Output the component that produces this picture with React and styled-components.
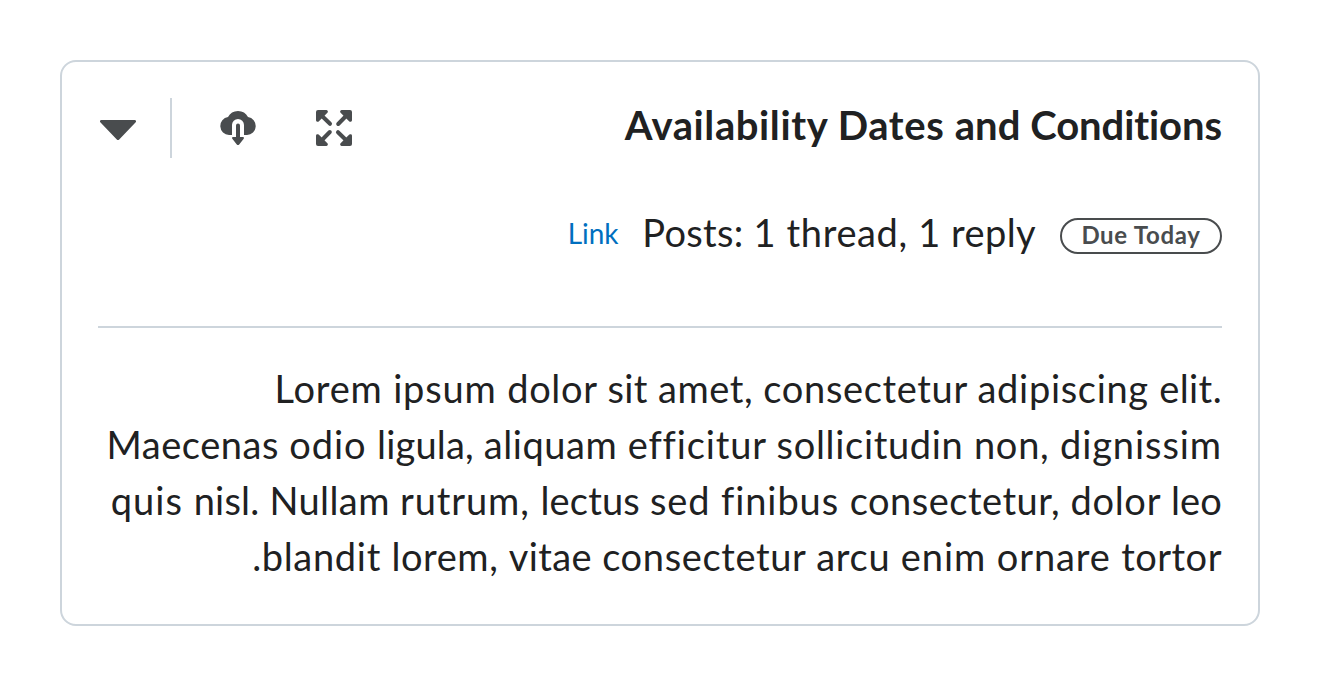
import React from 'react';
import styled, { createGlobalStyle } from 'styled-components';

const Global = createGlobalStyle`
  * { box-sizing: border-box; }
  body {
    margin: 0;
    background: #fff;
    color: #202122;
    font-family: Lato, "Open Sans", sans-serif;
  }
`;
const Page = styled.main`
  height: 686px;
  padding: 60px;
`;
const Panel = styled.section`
  height: 566px;
  padding: 36px;
  border: 2px solid #cdd5dc;
  border-radius: 16px;
`;
const Header = styled.header`
  display: flex;
  align-items: flex-start;
  justify-content: space-between;
  height: 60px;
`;
const Title = styled.h2`
  margin: 0;
  font-size: 40px;
  font-weight: 700;
  line-height: 54px;
  white-space: nowrap;
`;
const Tools = styled.div`
  display: flex;
  direction: ltr;
`;
const IconButton = styled.button`
  display: flex;
  align-items: center;
  justify-content: center;
  width: ${(p) => p.$width || 96}px;
  height: 60px;
  padding: 0;
  border: 0;
  background: none;
  color: #494c4e;
`;
const Divider = styled.div`
  width: 2px;
  height: 60px;
  margin: 0 18px 0 32px;
  background: #cdd5dc;
`;
const Meta = styled.div`
  display: flex;
  align-items: center;
  gap: 24px;
  height: 56px;
  margin-top: 48px;
`;
const Badge = styled.span`
  width: 162px;
  height: 36px;
  margin-top: 4px;
  border: 2px solid #494c4e;
  border-radius: 18px;
  color: #494c4e;
  font-size: 24px;
  font-weight: 700;
  line-height: 29px;
  text-align: center;
  white-space: nowrap;
`;
const Posts = styled.span`
  height: 56px;
  font-size: 38px;
  line-height: 52px;
  white-space: nowrap;
`;
const Link = styled.a`
  height: 40px;
  color: #006fbf;
  font-size: 28px;
  line-height: 38px;
  letter-spacing: -0.1px;
`;
const Content = styled.div`
  margin-top: 64px;
  padding-top: 32px;
  border-top: 2px solid #cdd5dc;
`;
const Paragraph = styled.p`
  margin: 0;
  font-size: 38px;
  line-height: 56px;
`;
const Line = styled.span`
  display: block;
  text-align: right;
  white-space: nowrap;
`;
const Word = styled.span`
  letter-spacing: ${(p) => p.$tracking}px;
`;

const Tracked = ({ words }) =>
  words.map(([word, tracking], index) => {
    const next = words[index + 1];
    return (
      <Word key={index} $tracking={tracking}>
        {next && next[0] !== '.' ? `${word} ` : word}
      </Word>
    );
  });

const title = [['Availability', 0.6], ['Dates', 0.62], ['and', 0.05], ['Conditions', -0.08]];
const posts = [['Posts:', 0.31], ['1', 0.61], ['thread,', 0.63], ['1', 0.56], ['reply', 0.4]];
const due = [['Due', 0.5], ['Today', 0.65]];
const lines = [
  [['Lorem', 0.8], ['ipsum', 0.83], ['dolor', 0.68], ['sit', 0.44], ['amet,', 0.54], ['consectetur', 0.66], ['adipiscing', 0.69], ['elit.', 0.4]],
  [['Maecenas', 0.55], ['odio', 0.91], ['ligula,', 0.18], ['aliquam', 0.58], ['efficitur', 0.84], ['sollicitudin', 0.68], ['non,', 0.74], ['dignissim', 0.92]],
  [['quis', 1.05], ['nisl.', 0.21], ['Nullam', 0.42], ['rutrum,', 0.89], ['lectus', 0.2], ['sed', 0.87], ['finibus', 0.92], ['consectetur,', 0.5], ['dolor', 0.73], ['leo', 0.18]],
  [['blandit', 0.7], ['lorem,', 0.58], ['vitae', 0.4], ['consectetur', 0.65], ['arcu', 0.72], ['enim', 0.92], ['ornare', 0.87], ['tortor', 0.5], ['.', 0.4]],
];

const Chevron = () => (
  <svg width="36" height="36" viewBox="0 0 36 36" fill="currentColor">
    <path d="M1.3 10h33.4a1.3 1.3 0 0 1 1 2.2L19.2 29.4a1.7 1.7 0 0 1-2.4 0L.3 12.2A1.3 1.3 0 0 1 1.3 10z" />
  </svg>
);
const CloudDownload = () => (
  <svg width="36" height="36" viewBox="0 0 36 36" fill="currentColor">
    <path d="M12 25H9A9 9 0 0 1 8 7.1a11.2 11.2 0 0 1 20 0A9 9 0 0 1 27 25h-3V15a6 6 0 0 0-12 0z" />
    <path d="M16 15.5a2 2 0 0 1 4 0V27h3a1 1 0 0 1 .7 1.7l-4.5 5.7a1.6 1.6 0 0 1-2.4 0l-4.5-5.7A1 1 0 0 1 13 27h3z" />
  </svg>
);
const Expand = () => (
  <svg width="36" height="36" viewBox="0 0 36 36" fill="currentColor">
    {[0, 90, 180, 270].map((angle) => (
      <g key={angle} transform={`rotate(${angle} 18 18)`}>
        <path d="M2 0h8.2a1.6 1.6 0 0 1 1.2 2.7L2.7 11.4A1.6 1.6 0 0 1 0 10.2V2a2 2 0 0 1 2-2z" />
        <path d="M5 5l9 8.8" fill="none" stroke="currentColor" strokeWidth="4" strokeLinecap="round" />
      </g>
    ))}
  </svg>
);

export default function App() {
  return (
    <>
      <Global />
      <Page dir="rtl">
        <Panel>
          <Header>
            <Title><Tracked words={title} /></Title>
            <Tools>
              <IconButton $width={40} aria-label="Collapse"><Chevron /></IconButton>
              <Divider />
              <IconButton aria-label="Download"><CloudDownload /></IconButton>
              <IconButton aria-label="Full screen"><Expand /></IconButton>
            </Tools>
          </Header>
          <Meta>
            <Badge><Tracked words={due} /></Badge>
            <Posts><Tracked words={posts} /></Posts>
            <Link>Link</Link>
          </Meta>
          <Content>
            <Paragraph>
              {lines.map((words, index) => (
                <Line key={index} dir={index === 0 ? 'ltr' : 'rtl'}>
                  <Tracked words={words} />
                </Line>
              ))}
            </Paragraph>
          </Content>
        </Panel>
      </Page>
    </>
  );
}
